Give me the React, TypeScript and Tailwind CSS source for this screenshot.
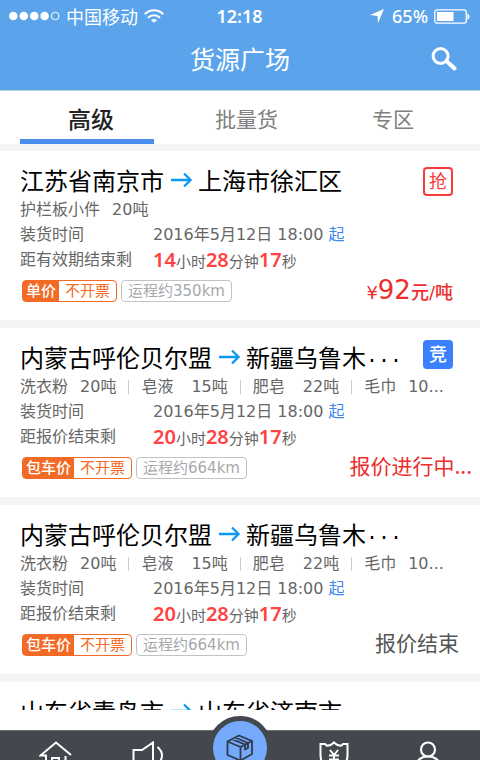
import React from 'react';

function Arrow() {
  return (
    <svg width="22" height="16" viewBox="0 0 22 16" fill="none" stroke="#0c9af0" strokeWidth="2.3" aria-hidden="true">
      <path d="M1 8H20.5M14 1.5L20.5 8L14 14.5" />
    </svg>
  );
}

function StatusBar() {
  return (
    <div className="flex h-8 items-center justify-between pl-[9px] pr-[10px] text-white">
      <div className="flex flex-1 items-center">
        <svg width="51" height="10" viewBox="0 0 51 10" fill="#fff" aria-hidden="true">
          <circle cx="4.3" cy="5" r="4.3" />
          <circle cx="14.8" cy="5" r="4.3" />
          <circle cx="25.2" cy="5" r="4.3" />
          <circle cx="35.6" cy="5" r="4.3" />
          <circle cx="46.2" cy="5" r="3.8" fill="none" stroke="#fff" />
        </svg>
        <span className="ml-1.5 font-['Noto_Sans_CJK_SC',sans-serif] text-lg leading-5">中国移动</span>
        <svg className="ml-1.5" width="20" height="14" viewBox="0 0 20 14" fill="none" stroke="#fff" strokeWidth="2" aria-hidden="true">
          <path d="M0.8 5.2C6 0 14 0 19.2 5.2M4 8.7C7.5 5.5 12.5 5.5 16 8.7" />
          <path d="M7 11C8.5 9.5 11.5 9.5 13 11L10 13.8Z" fill="#fff" stroke="none" />
        </svg>
      </div>
      <span className="font-['Noto_Sans',sans-serif] text-lg font-semibold leading-5">12:18</span>
      <div className="flex flex-1 items-center justify-end font-['Noto_Sans',sans-serif] text-lg font-medium leading-5">
        <svg className="mr-2" width="14" height="14" viewBox="0 0 14 14" fill="#fff" aria-hidden="true">
          <path d="M14 0L8 14L7.5 7L0 6Z" />
        </svg>
        65%
        <svg className="ml-1.5" width="36" height="15" viewBox="0 0 36 15" aria-hidden="true">
          <rect x="0.8" y="0.8" width="31.5" height="13.4" rx="2.5" fill="none" stroke="#fff" strokeWidth="1.3" />
          <rect x="3" y="3" width="16.5" height="9" fill="#fff" />
          <path d="M33.5 4.5Q35.5 5 35.5 7.5T33.5 10.5Z" fill="#fff" />
        </svg>
      </div>
    </div>
  );
}

type Good = { name: string; amount: string; wide?: boolean };

type RouteProps = { from: string; to: string; cut?: boolean };

type CardProps = RouteProps & {
  goods: Good[];
  countdown: string;
  hours: string;
  priceTag: string;
  distance: string;
  badge?: React.ReactNode;
  status: React.ReactNode;
};

function Num({ children }: { children: React.ReactNode }) {
  return <b className="font-['Noto_Sans',sans-serif] text-xl font-semibold leading-[25px] text-[#ff4242]">{children}</b>;
}

function Route({ from, to, cut }: RouteProps) {
  return (
    <h2 className="flex h-8 items-center whitespace-nowrap font-['Noto_Sans_CJK_SC',sans-serif] text-2xl text-black">
      {from}
      <span className="mx-1.5"><Arrow /></span>
      {to}
      {cut && <span className="font-['Liberation_Mono',monospace] text-xl">...</span>}
    </h2>
  );
}

function Card({ from, to, cut, goods, countdown, hours, priceTag, distance, badge, status }: CardProps) {
  return (
    <article className="relative h-[169px] shrink-0 bg-white pl-5 pt-[13px] text-base text-[#666]">
      <Route from={from} to={to} cut={cut} />
      <div className="flex h-[26px] items-center whitespace-nowrap pt-0.5">
        {goods.map((g, i) => (
          <span key={g.name} className="flex items-center">
            {i > 0 && <i className="mx-3 h-3.5 w-px bg-[#ccc]" />}
            <span>{g.name}</span>
            <span className={g.wide ? 'ml-[18px]' : 'ml-3'}>{g.amount}</span>
          </span>
        ))}
      </div>
      <dl className="grid grid-cols-[133px_auto] leading-[25px]">
        <dt>装货时间</dt>
        <dd>2016年5月12日 18:00 <span className="text-[#3f86ee]">起</span></dd>
        <dt>{countdown}</dt>
        <dd className="flex h-[25px] items-baseline text-[15px]">
          <Num>{hours}</Num>小时<Num>28</Num>分钟<Num>17</Num>秒
        </dd>
      </dl>
      <div className="flex h-[38px] items-center justify-between pl-0.5 text-[15px]">
        <div className="flex h-[22px] items-stretch whitespace-nowrap leading-5">
          <span className="flex rounded-sm border border-[#f26a25] text-[#f26a25]">
            <span className="bg-[#f26a25] px-[3px] font-medium text-white">{priceTag}</span>
            <span className="px-1.5">不开票</span>
          </span>
          <span className="ml-1 rounded-sm border border-[#bfc3c6] px-1.5 text-[#a5a9ac]">{distance}</span>
        </div>
        {status}
      </div>
      {badge}
    </article>
  );
}

const soaps: Good[] = [
  { name: '洗衣粉', amount: '20吨' },
  { name: '皂液', amount: '15吨', wide: true },
  { name: '肥皂', amount: '22吨', wide: true },
  { name: '毛巾', amount: '10...' },
];

export default function App() {
  return (
    <div className="flex h-screen flex-col overflow-hidden bg-white font-['DejaVu_Sans','Noto_Sans_CJK_SC',sans-serif]">
      <header className="shrink-0 border-b border-[#b9cfe4] bg-[#5ba4eb]">
        <StatusBar />
        <div className="relative flex h-[58px] items-center justify-center pb-1.5 text-white">
          <h1 className="font-['Noto_Sans_CJK_SC',sans-serif] text-[25px] leading-8">货源广场</h1>
          <button className="absolute right-[23px] top-[15px]" aria-label="搜索">
            <svg width="26" height="24" viewBox="0 0 26 24" fill="none" stroke="#fff" aria-hidden="true">
              <circle cx="9.6" cy="9" r="7.5" strokeWidth="3" />
              <path d="M15.5 14L23.5 21.5" strokeWidth="4" strokeLinecap="round" />
            </svg>
          </button>
        </div>
      </header>

      <nav className="flex h-[53px] shrink-0 justify-between px-5 font-['Noto_Sans_CJK_SC',sans-serif] text-[21px] text-[#808080]">
        <button className="w-[134px] border-b-[5px] border-[#4a8ff0] pt-1.5 pl-2 text-[23px] font-medium text-[#222]">高级</button>
        <button className="w-[134px] whitespace-nowrap pl-[42px] pt-0.5 text-left">批量货</button>
        <button className="w-[134px] pt-0.5">专区</button>
      </nav>

      <main className="flex min-h-0 flex-1 flex-col gap-2 overflow-hidden bg-[#f4f4f4] pt-[7px]">
        <Card
          from="江苏省南京市"
          to="上海市徐汇区"
          goods={[{ name: '护栏板小件', amount: '20吨' }]}
          countdown="距有效期结束剩"
          hours="14"
          priceTag="单价"
          distance="运程约350km"
          badge={
            <span className="absolute right-[27px] top-4 flex h-[29px] w-[30px] items-center justify-center rounded border-2 border-[#f83b3b] text-lg leading-6 text-[#f83b3b]">抢</span>
          }
          status={
            <p className="flex items-baseline pr-[27px] text-lg font-medium leading-7 text-[#ee2d2d]">
              ¥<span className="text-[26px] leading-7">92</span>元/吨
            </p>
          }
        />
        <Card
          from="内蒙古呼伦贝尔盟"
          to="新疆乌鲁木"
          cut
          goods={soaps}
          countdown="距报价结束剩"
          hours="20"
          priceTag="包车价"
          distance="运程约664km"
          badge={
            <span className="absolute right-[27px] top-3 flex h-[29px] w-[30px] items-center justify-center rounded bg-[#3a7ffb] text-lg leading-6 font-medium text-white">竞</span>
          }
          status={<p className="pb-1.5 pr-2 font-['Noto_Sans_CJK_SC',sans-serif] text-[21px] leading-7 text-[#ee2d2d]">报价进行中...</p>}
        />
        <Card
          from="内蒙古呼伦贝尔盟"
          to="新疆乌鲁木"
          cut
          goods={soaps}
          countdown="距报价结束剩"
          hours="20"
          priceTag="包车价"
          distance="运程约664km"
          status={<p className="pb-1.5 pr-[21px] font-['Noto_Sans_CJK_SC',sans-serif] text-[21px] leading-7 text-[#555]">报价结束</p>}
        />
        <article className="shrink-0 bg-white pl-5 pt-[13px]">
          <Route from="山东省青岛市" to="山东省济南市" />
        </article>
      </main>

      <footer className="shrink-0 bg-white pt-5">
        <nav className="relative grid h-[30px] grid-cols-5 items-start border-t border-[#6a6f75] bg-[#43484f] pt-2.5">
          <a href="#home" aria-label="首页" className="flex justify-center pl-4">
            <svg width="34" height="32" viewBox="0 0 34 32" fill="none" stroke="#fff" strokeWidth="2" aria-hidden="true">
              <path d="M7 28V14.5H1.5L17 1.5L32 14M26.5 15V28M13 28V17H20V28" />
            </svg>
          </a>
          <a href="#news" aria-label="消息" className="flex justify-center pl-2">
            <svg width="32" height="32" viewBox="0 0 32 32" fill="none" stroke="#fff" strokeWidth="2" aria-hidden="true">
              <path d="M1.5 9H10L21 1.5V28L10 20H1.5ZM8 20V27H12M25.5 6C31.5 11 31.5 18 25.5 23" />
            </svg>
          </a>
          <a href="#goods" aria-label="货源" className="flex justify-center">
            <span className="absolute left-1/2 -top-[15px] flex h-16 w-16 -translate-x-1/2 items-center justify-center rounded-full border-[5px] border-[#43484f] bg-[#74a9fb]">
              <svg width="28" height="28" viewBox="0 0 28 28" fill="none" stroke="#2f3a4a" strokeWidth="1.8" strokeLinejoin="round" aria-hidden="true">
                <path d="M1.5 7.5L13 1.5L26 7V20L14.5 26.5L1.5 21ZM1.5 7.5L14.5 13L26 7M14.5 13V26.5M6 5.2L19 10.5V15.5L22 14V9L9.5 3.5" />
              </svg>
            </span>
          </a>
          <a href="#insurance" aria-label="保障" className="flex justify-center pr-1">
            <svg width="30" height="32" viewBox="0 0 30 32" fill="none" stroke="#fff" strokeWidth="2" aria-hidden="true">
              <path d="M15 1.5C12.5 4 10 5 7.5 4.5L6 3H1.5V14C1.5 21 6 27 15 30C24 27 28.5 21 28.5 14V3H24L22.5 4.5C20 5 17.5 4 15 1.5Z" />
              <path d="M11 9L15 14L19 9M10 14.5H20M10 18.5H20M15 14V24" />
            </svg>
          </a>
          <a href="#me" aria-label="我的" className="flex justify-center pr-2">
            <svg width="28" height="32" viewBox="0 0 28 32" fill="none" stroke="#fff" strokeWidth="2.2" aria-hidden="true">
              <circle cx="14" cy="8.5" r="7" />
              <path d="M2 28C2 19 7 15.5 14 15.5S26 19 26 28" />
            </svg>
          </a>
        </nav>
      </footer>
    </div>
  );
}
